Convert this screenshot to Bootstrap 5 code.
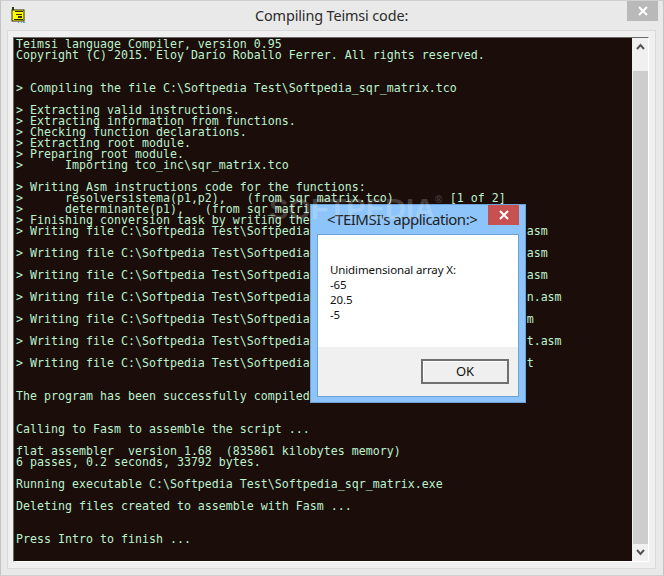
<!DOCTYPE html>
<html lang="en">
<head>
<meta charset="utf-8">
<title>Compiling Teimsi code:</title>
<link href="https://cdn.jsdelivr.net/npm/bootstrap@5.3.0/dist/css/bootstrap.min.css" rel="stylesheet">
<style>
html,body{margin:0;background:#e9e9e9;}
.app-win{width:664px;height:576px;background:#e9e9e9;border:1px solid #c4c4c4;border-bottom-color:#d0d0d0;border-top-color:#d0d0d0;}
.app-head{height:29px;padding-left:10px;}
.app-title{font:14.4px/1 "Noto Sans",sans-serif;color:#2b2b2b;left:254px;top:8px;letter-spacing:-.12px;}
.win-x{width:31px;height:20px;background:#b9b9b9;margin-right:5px;align-self:flex-start;}
.frame-a{margin:0 7px 7px 6px;height:539px;border:1px solid #dadada;background:#f0f0f0;padding:6px 6px 5px 5px;}
.cons-wrap{height:525px;border:1px solid;border-color:#696969 #fff #fff #696969;}
.cons{width:618px;height:100%;margin:0;background:#1a0d0a;color:#bdf2cf;padding:1px 0 0 2px;font:11.6px/11px "DejaVu Sans Mono",monospace;letter-spacing:.015px;overflow:hidden;white-space:pre;}
.sbar{width:16px;background:#f0f0f0;}
.sbar-btn{height:17px;}
.sbar-gap{height:16px;}
.sbar-thumb{background:#cdcdcd;margin-left:1px;}
.msg{left:309px;top:203px;width:216px;height:199px;background:#8dc5fa;border:1px solid #6ea2d4;}
.msg-title{height:29px;padding-left:16px;font:15px/1 "Noto Sans",sans-serif;color:#222;letter-spacing:-.5px;}
.msg-x{width:31px;height:20px;background:#c75050;top:0;right:6px;}
.msg-body{margin:0 6px 5px 6px;height:163px;border:1px solid #6ea2d4;background:#fff;}
.msg-text{height:112px;padding:27px 12px 0 12px;font:11.5px/15px "Noto Sans",sans-serif;color:#111;letter-spacing:-.12px;}
.msg-foot{height:49px;background:#f0f0f0;padding:12px 9px 0 0;}
.ok-btn{width:88px;height:25px;padding:0;border-radius:0;background:#efefef;border:2px solid #707070;box-shadow:inset 1px 1px 0 #fff;font:13px/1 "Noto Sans",sans-serif;color:#111;--bs-btn-hover-bg:#efefef;}
.wm{left:268px;top:194px;font:bold 29px/1 "Liberation Sans",sans-serif;color:rgba(255,255,255,.2);pointer-events:none;}
.wm-r{font-size:10px;vertical-align:top;}
</style>
</head>
<body>
<div class="app-win position-relative overflow-hidden">
  <div class="app-head d-flex align-items-center justify-content-between">
    <svg width="16" height="17" viewBox="0 0 16 17" aria-hidden="true">
      <rect x="1" y="3" width="12" height="11" fill="#ffff00" stroke="#2e2e00"/>
      <path d="M1 0h2v3H1zM4 4h8v1H4zM5 7h6v1H5zM7 9h4v2H7zM3 12h9v1H3z" fill="#33330a"/>
      <path d="M7 15h1v1H7zM10 15h1v1h-1zM12 15h2v1h-2z" fill="#4aa3d8"/>
    </svg>
    <span class="app-title position-absolute">Compiling Teimsi code:</span>
    <div class="win-x d-flex align-items-center justify-content-center">
      <svg width="10" height="10" viewBox="0 0 10 10" aria-hidden="true"><path d="M1 1l8 8M9 1l-8 8" stroke="#fff" stroke-width="2"/></svg>
    </div>
  </div>
  <div class="frame-a">
    <div class="cons-wrap d-flex">
<pre class="cons">Teimsi language Compiler, version 0.95
Copyright (C) 2015. Eloy Darío Roballo Ferrer. All rights reserved.


&gt; Compiling the file C:\Softpedia Test\Softpedia_sqr_matrix.tco

&gt; Extracting valid instructions.
&gt; Extracting information from functions.
&gt; Checking function declarations.
&gt; Extracting root module.
&gt; Preparing root module.
&gt;      Importing tco_inc\sqr_matrix.tco

&gt; Writing Asm instructions code for the functions:
&gt;      resolversistema(p1,p2),   (from sqr_matrix.tco)        [1 of 2]
&gt;      determinante(p1),   (from sqr_matri
&gt; Finishing conversion task by writing the
&gt; Writing file C:\Softpedia Test\Softpedia                               asm

&gt; Writing file C:\Softpedia Test\Softpedia                               asm

&gt; Writing file C:\Softpedia Test\Softpedia                               asm

&gt; Writing file C:\Softpedia Test\Softpedia                               n.asm

&gt; Writing file C:\Softpedia Test\Softpedia                               m

&gt; Writing file C:\Softpedia Test\Softpedia                               t.asm

&gt; Writing file C:\Softpedia Test\Softpedia                               t


The program has been successfully compiled


Calling to Fasm to assemble the script ...

flat assembler  version 1.68  (835861 kilobytes memory)
6 passes, 0.2 seconds, 33792 bytes.

Running executable C:\Softpedia Test\Softpedia_sqr_matrix.exe

Deleting files created to assemble with Fasm ...


Press Intro to finish ...</pre>
      <div class="sbar d-flex flex-column">
        <div class="sbar-btn d-flex align-items-center justify-content-center">
          <svg width="9" height="7" viewBox="0 0 9 7" aria-hidden="true"><path d="M1 6l3.500-4L8 6" fill="none" stroke="#555" stroke-width="2"/></svg>
        </div>
        <div class="sbar-gap"></div>
        <div class="sbar-thumb flex-grow-1"></div>
        <div class="sbar-btn d-flex align-items-center justify-content-center">
          <svg width="9" height="7" viewBox="0 0 9 7" aria-hidden="true"><path d="M1 1l3.500 4L8 1" fill="none" stroke="#555" stroke-width="2"/></svg>
        </div>
      </div>
    </div>
  </div>
  <div class="msg position-absolute">
    <div class="msg-title d-flex align-items-center">&lt;TEIMSI's application:&gt;</div>
    <div class="msg-x position-absolute d-flex align-items-center justify-content-center">
      <svg width="10" height="10" viewBox="0 0 10 10" aria-hidden="true"><path d="M1 1l8 8M9 1l-8 8" stroke="#fff" stroke-width="2"/></svg>
    </div>
    <div class="msg-body">
      <div class="msg-text">Unidimensional array X:<br>-65<br>20.5<br>-5</div>
      <div class="msg-foot d-flex justify-content-end">
        <button type="button" class="btn ok-btn">OK</button>
      </div>
    </div>
  </div>
  <div class="wm position-absolute">SOFTPEDIA<span class="wm-r">®</span></div>
</div>
</body>
</html>
